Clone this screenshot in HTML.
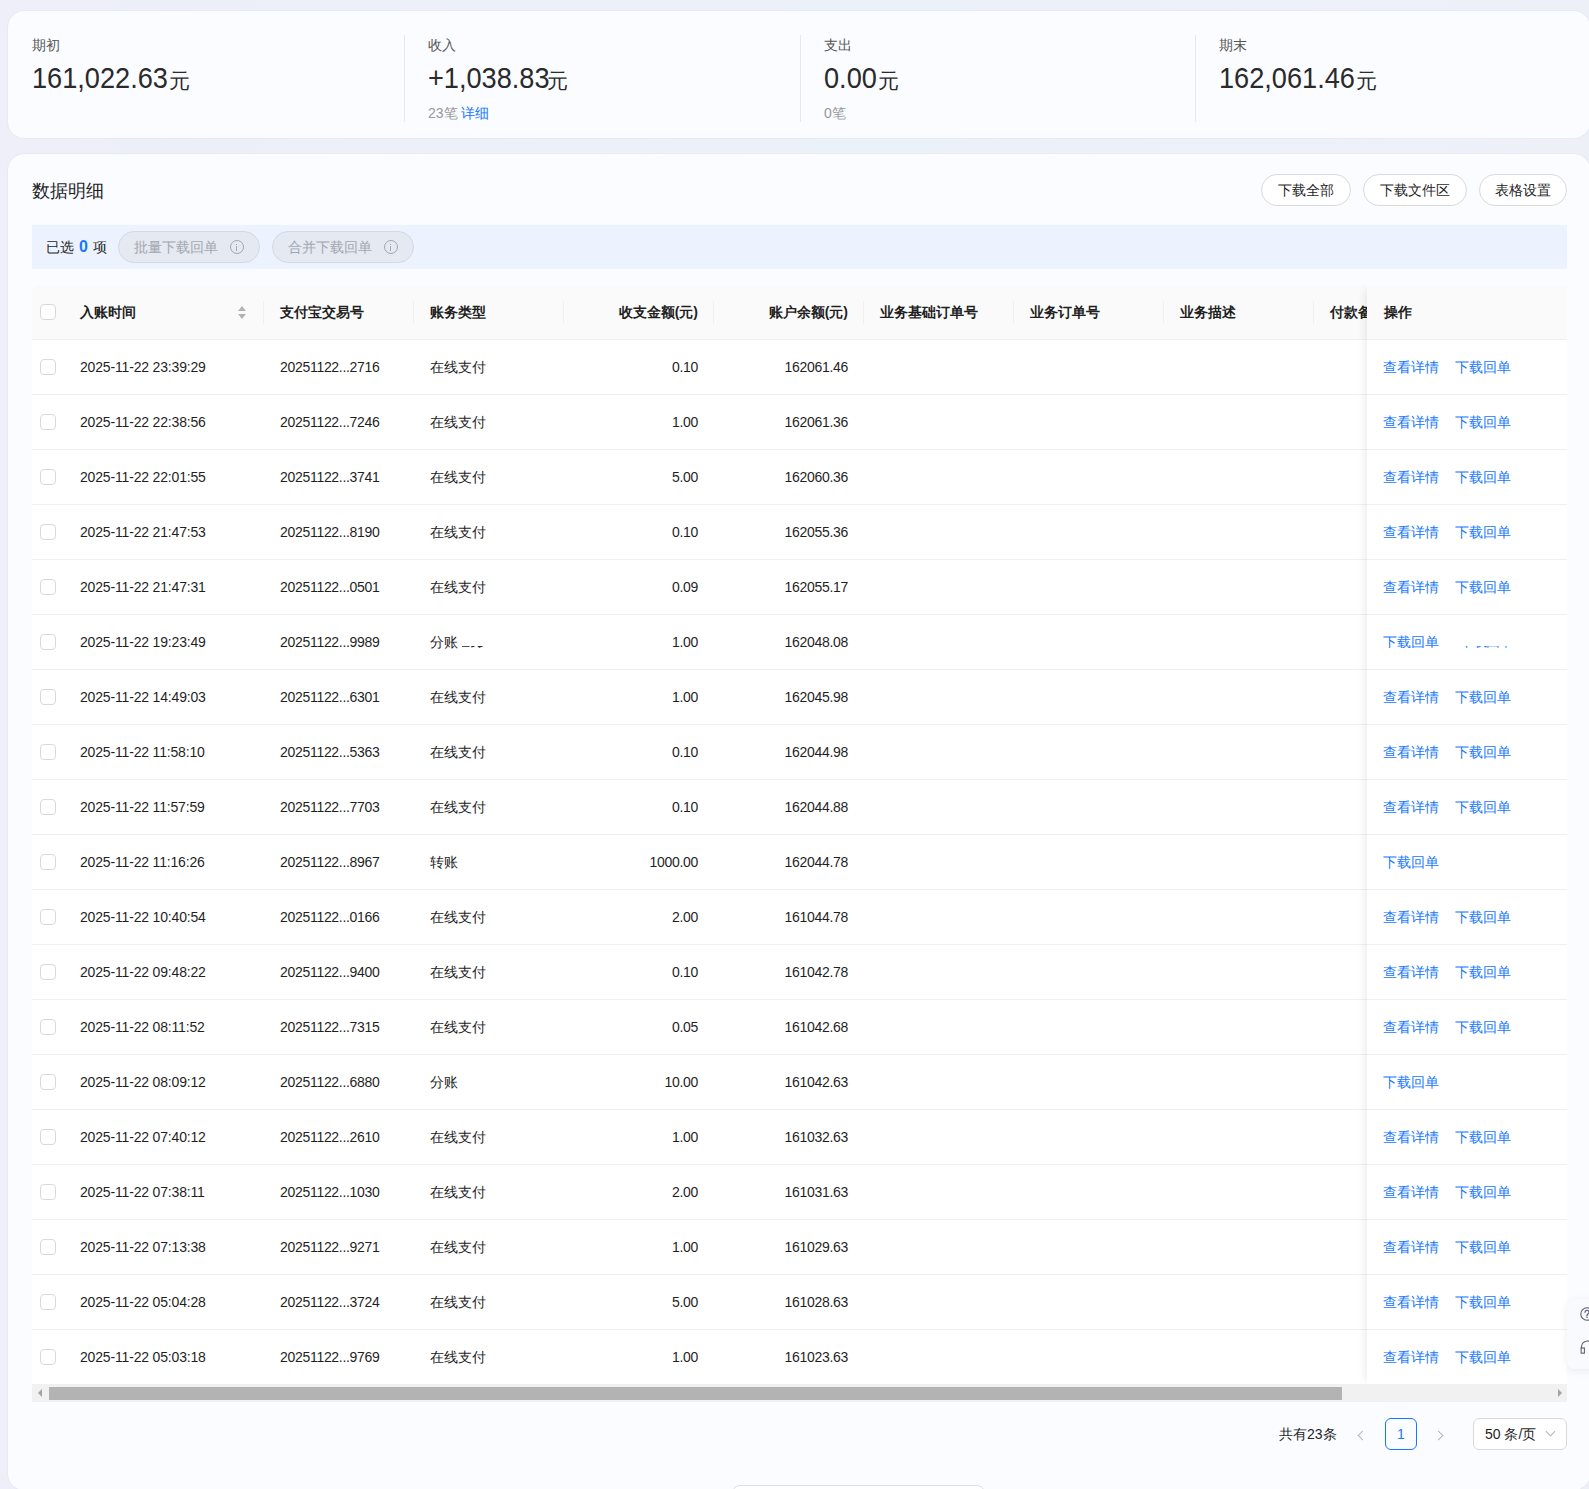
<!DOCTYPE html>
<html><head><meta charset="utf-8"><style>
*{margin:0;padding:0;box-sizing:border-box}
html,body{width:1589px;height:1489px;overflow:hidden}
body{background:linear-gradient(90deg,#eeeff8 0%,#ebf1f9 55%,#eef0f8 100%);font-family:"Liberation Sans",sans-serif;color:#1f1f1f;position:relative;font-size:14px}
.card{position:absolute;background:#fafcff;border-radius:16px;box-shadow:0 0 1.5px rgba(40,50,70,0.12)}
#c1{left:8px;top:11px;width:1582px;height:127px}
#c2{left:8px;top:154px;width:1582px;height:1336px}
.sum{position:absolute;top:0;height:126px}
.sep{position:absolute;top:24px;width:1px;height:87px;background:#e6e8ec}
.lbl{position:absolute;top:27px;font-size:13.5px;color:#555;line-height:16px;white-space:nowrap}
.num{position:absolute;left:0;top:50px;width:200px;height:34px;font-size:30px;line-height:34px;color:#2a2a2a;white-space:nowrap}
.num .d{position:absolute;left:0;top:0;transform:scaleX(0.905);transform-origin:0 0}
.num small{position:absolute;top:3px;font-size:20.5px;line-height:34px}
.sub{position:absolute;top:94px;font-size:14px;line-height:16px;color:#999;white-space:nowrap}
.sub a{color:#1677ff;text-decoration:none}
.title{position:absolute;left:24px;top:26px;font-size:18px;line-height:22px;color:#1f1f1f}
.btn{position:absolute;top:20px;height:32px;border:1px solid #d9d9d9;border-radius:16px;background:#fff;font-size:14px;line-height:30px;text-align:center;color:#1f1f1f}
.selbar{position:absolute;left:24px;top:71px;width:1535px;height:44px;background:#edf3fe}
.selbar .t{position:absolute;left:14px;top:14px;font-size:14px;line-height:16px;white-space:nowrap}
.selbar .t b{color:#1677ff;font-size:16px;margin:0 1px}
.pill{position:absolute;top:6px;height:32px;width:142px;border:1px solid #d5d9e0;border-radius:16px;background:#e4e9f2;color:#a3a7ae;font-size:14px;line-height:30px;padding-left:15px;white-space:nowrap}
.pill i{position:absolute;right:15px;top:8px;width:14px;height:14px;border:1.3px solid #a3a7ae;border-radius:50%}
.pill i:before{content:"";position:absolute;left:5.2px;top:5px;width:1.2px;height:5px;background:#a3a7ae}
.pill i:after{content:"";position:absolute;left:5.2px;top:2.5px;width:1.2px;height:1.2px;background:#a3a7ae}
#tbl{position:absolute;left:24px;top:131px;width:1535px;height:1100px;overflow:hidden;border-radius:8px 0 0 0}
.hdr{position:absolute;left:0;top:0;width:1535px;height:55px;background:#fafafa;border-bottom:1px solid #f0f0f0}
.h{position:absolute;top:19px;font-size:14px;font-weight:bold;line-height:16px;white-space:nowrap;color:#1f1f1f}
.hs{position:absolute;top:16px;width:1px;height:23px;background:#f0f0f0}
.row{position:absolute;left:0;width:1535px;height:55px;background:#fff;border-bottom:1px solid #f0f0f0}
.row.last{border-bottom:none}
.cb{position:absolute;left:8px;top:19px;width:16px;height:16px;border:1px solid #d9d9d9;border-radius:4px;background:#fff}
.c{position:absolute;top:19px;font-size:14px;line-height:16px;white-space:nowrap;color:#1f1f1f}
.c1{left:48px;letter-spacing:-0.17px}.c2,.c4,.c5{letter-spacing:-0.3px}.c2{left:248px}.c3{left:398px}
.c4{right:869px;text-align:right}.c5{right:719px;text-align:right}
.g1{position:absolute;left:32px;top:12px;width:24px;height:2px;overflow:hidden}
.g1 span{position:absolute;left:-6px;top:-13px;letter-spacing:-3px;font-size:14px;line-height:16px}
.lk.clip{height:14px;overflow:hidden}
.clip2{position:absolute;left:93px;top:31px;width:52px;height:2px;overflow:hidden}
.clip2 span{position:absolute;left:0;top:-13px;font-size:14px;line-height:16px;color:#1677ff;white-space:nowrap;letter-spacing:-1px}
.fix{position:absolute;left:1335px;top:0;width:201px;height:1100px;box-shadow:-6px 0 8px -4px rgba(0,0,0,0.08)}
.fix .fh{position:absolute;left:0;top:0;width:201px;height:55px;background:#fafafa;border-bottom:1px solid #f0f0f0}
.orow{position:absolute;left:0;width:201px;height:55px;background:#fff;border-bottom:1px solid #f0f0f0}
.orow.last{border-bottom:none}
.lk{position:relative;top:19px;left:16px;margin-right:16px;font-size:14px;line-height:16px;color:#1677ff;white-space:nowrap;float:left}
.scroll{position:absolute;left:24px;top:1230px;width:1535px;height:18px;background:#f1f1f1}
.thumb{position:absolute;left:17px;top:3px;width:1293px;height:13px;background:#b3b3b3}
.arrL{position:absolute;left:6px;top:5px;width:0;height:0;border-top:4px solid transparent;border-bottom:4px solid transparent;border-right:4px solid #a3a3a3}
.arrR{position:absolute;right:5px;top:5px;width:0;height:0;border-top:4px solid transparent;border-bottom:4px solid transparent;border-left:4px solid #a3a3a3}
.pg{position:absolute;top:1264px;font-size:14px;line-height:32px;color:#1f1f1f;white-space:nowrap}
.pbox{position:absolute;top:1264px;width:32px;height:32px;border:1px solid #1677ff;border-radius:6px;color:#1677ff;text-align:center;line-height:30px;font-size:14px}
.chev{position:absolute;width:7px;height:7px;border-left:1px solid #b5b5b5;border-bottom:1px solid #b5b5b5}
.psel{position:absolute;top:1264px;left:1465px;width:94px;height:32px;border:1px solid #d9d9d9;border-radius:6px;background:#fff;font-size:14px;line-height:30px;padding-left:11px;white-space:nowrap}

.widget{position:absolute;left:1567px;top:1299px;width:40px;height:70px;background:#f9fafd;border-radius:8px;box-shadow:0 2px 8px rgba(0,0,0,0.07)}
.widget .q{position:absolute;left:13px;top:8px;width:13px;height:13px;border:1.3px solid #5c6070;border-radius:50%;font-size:9px;line-height:11px;text-align:center;color:#5c6070;font-weight:bold}
.widget .hs2{position:absolute;left:14px;top:42px;width:14px;height:12px;border:1.5px solid #5c6070;border-bottom:none;border-radius:7px 7px 0 0}
.widget .hs2:before{content:"";position:absolute;left:-1.5px;top:5px;width:4px;height:7px;border:1.5px solid #5c6070;box-sizing:border-box}
.bbox{position:absolute;left:732px;top:1485px;width:253px;height:40px;background:#fff;border:1px solid #dcdee3;border-radius:8px}
.sort{position:absolute;left:206px;top:21px;width:9px;height:14px}
.sort:before{content:"";position:absolute;left:0;top:0;border-left:4.5px solid transparent;border-right:4.5px solid transparent;border-bottom:5.5px solid #b3b3b3}
.sort:after{content:"";position:absolute;left:0;top:8px;border-left:4.5px solid transparent;border-right:4.5px solid transparent;border-top:5.5px solid #b3b3b3}

</style></head><body>
<div class="card" id="c1">
  <div class="sum" style="left:24px"><div class="lbl" style="left:0">期初</div><div class="num"><span class="d">161,022.63</span><small style="left:137px">元</small></div></div>
  <div class="sep" style="left:396px"></div>
  <div class="sum" style="left:420px"><div class="lbl" style="left:0">收入</div><div class="num"><span class="d">+1,038.83</span><small style="left:119px">元</small></div><div class="sub" style="left:0">23笔 <a>详细</a></div></div>
  <div class="sep" style="left:792px"></div>
  <div class="sum" style="left:816px"><div class="lbl" style="left:0">支出</div><div class="num"><span class="d">0.00</span><small style="left:54px">元</small></div><div class="sub" style="left:0">0笔</div></div>
  <div class="sep" style="left:1187px"></div>
  <div class="sum" style="left:1211px"><div class="lbl" style="left:0">期末</div><div class="num"><span class="d">162,061.46</span><small style="left:137px">元</small></div></div>
</div>
<div class="card" id="c2">
  <div class="title">数据明细</div>
  <div class="btn" style="left:1253px;width:90px">下载全部</div>
  <div class="btn" style="left:1355px;width:104px">下载文件区</div>
  <div class="btn" style="left:1471px;width:88px">表格设置</div>
  <div class="selbar">
    <div class="t">已选 <b>0</b> 项</div>
    <div class="pill" style="left:86px">批量下载回单<i></i></div>
    <div class="pill" style="left:240px">合并下载回单<i></i></div>
  </div>
  <div id="tbl">
    <div class="hdr">
      <span class="cb"></span>
      <span class="h" style="left:48px">入账时间</span><span class="sort"></span>
      <span class="hs" style="left:231px"></span>
      <span class="h" style="left:248px">支付宝交易号</span>
      <span class="hs" style="left:381px"></span>
      <span class="h" style="left:398px">账务类型</span>
      <span class="hs" style="left:531px"></span>
      <span class="h" style="right:869px">收支金额(元)</span>
      <span class="hs" style="left:681px"></span>
      <span class="h" style="right:719px">账户余额(元)</span>
      <span class="hs" style="left:831px"></span>
      <span class="h" style="left:848px">业务基础订单号</span>
      <span class="hs" style="left:981px"></span>
      <span class="h" style="left:998px">业务订单号</span>
      <span class="hs" style="left:1131px"></span>
      <span class="h" style="left:1148px">业务描述</span>
      <span class="hs" style="left:1281px"></span>
      <span class="h" style="left:1298px">付款备注</span>
    </div>
<div class="row" style="top:55px"><span class="cb"></span><span class="c c1">2025-11-22 23:39:29</span><span class="c c2">20251122...2716</span><span class="c c3">在线支付</span><span class="c c4">0.10</span><span class="c c5">162061.46</span></div>
<div class="row" style="top:110px"><span class="cb"></span><span class="c c1">2025-11-22 22:38:56</span><span class="c c2">20251122...7246</span><span class="c c3">在线支付</span><span class="c c4">1.00</span><span class="c c5">162061.36</span></div>
<div class="row" style="top:165px"><span class="cb"></span><span class="c c1">2025-11-22 22:01:55</span><span class="c c2">20251122...3741</span><span class="c c3">在线支付</span><span class="c c4">5.00</span><span class="c c5">162060.36</span></div>
<div class="row" style="top:220px"><span class="cb"></span><span class="c c1">2025-11-22 21:47:53</span><span class="c c2">20251122...8190</span><span class="c c3">在线支付</span><span class="c c4">0.10</span><span class="c c5">162055.36</span></div>
<div class="row" style="top:275px"><span class="cb"></span><span class="c c1">2025-11-22 21:47:31</span><span class="c c2">20251122...0501</span><span class="c c3">在线支付</span><span class="c c4">0.09</span><span class="c c5">162055.17</span></div>
<div class="row" style="top:330px"><span class="cb"></span><span class="c c1">2025-11-22 19:23:49</span><span class="c c2">20251122...9989</span><span class="c c3">分账<span class="g1"><span>在线支付</span></span></span><span class="c c4">1.00</span><span class="c c5">162048.08</span></div>
<div class="row" style="top:385px"><span class="cb"></span><span class="c c1">2025-11-22 14:49:03</span><span class="c c2">20251122...6301</span><span class="c c3">在线支付</span><span class="c c4">1.00</span><span class="c c5">162045.98</span></div>
<div class="row" style="top:440px"><span class="cb"></span><span class="c c1">2025-11-22 11:58:10</span><span class="c c2">20251122...5363</span><span class="c c3">在线支付</span><span class="c c4">0.10</span><span class="c c5">162044.98</span></div>
<div class="row" style="top:495px"><span class="cb"></span><span class="c c1">2025-11-22 11:57:59</span><span class="c c2">20251122...7703</span><span class="c c3">在线支付</span><span class="c c4">0.10</span><span class="c c5">162044.88</span></div>
<div class="row" style="top:550px"><span class="cb"></span><span class="c c1">2025-11-22 11:16:26</span><span class="c c2">20251122...8967</span><span class="c c3">转账</span><span class="c c4">1000.00</span><span class="c c5">162044.78</span></div>
<div class="row" style="top:605px"><span class="cb"></span><span class="c c1">2025-11-22 10:40:54</span><span class="c c2">20251122...0166</span><span class="c c3">在线支付</span><span class="c c4">2.00</span><span class="c c5">161044.78</span></div>
<div class="row" style="top:660px"><span class="cb"></span><span class="c c1">2025-11-22 09:48:22</span><span class="c c2">20251122...9400</span><span class="c c3">在线支付</span><span class="c c4">0.10</span><span class="c c5">161042.78</span></div>
<div class="row" style="top:715px"><span class="cb"></span><span class="c c1">2025-11-22 08:11:52</span><span class="c c2">20251122...7315</span><span class="c c3">在线支付</span><span class="c c4">0.05</span><span class="c c5">161042.68</span></div>
<div class="row" style="top:770px"><span class="cb"></span><span class="c c1">2025-11-22 08:09:12</span><span class="c c2">20251122...6880</span><span class="c c3">分账</span><span class="c c4">10.00</span><span class="c c5">161042.63</span></div>
<div class="row" style="top:825px"><span class="cb"></span><span class="c c1">2025-11-22 07:40:12</span><span class="c c2">20251122...2610</span><span class="c c3">在线支付</span><span class="c c4">1.00</span><span class="c c5">161032.63</span></div>
<div class="row" style="top:880px"><span class="cb"></span><span class="c c1">2025-11-22 07:38:11</span><span class="c c2">20251122...1030</span><span class="c c3">在线支付</span><span class="c c4">2.00</span><span class="c c5">161031.63</span></div>
<div class="row" style="top:935px"><span class="cb"></span><span class="c c1">2025-11-22 07:13:38</span><span class="c c2">20251122...9271</span><span class="c c3">在线支付</span><span class="c c4">1.00</span><span class="c c5">161029.63</span></div>
<div class="row" style="top:990px"><span class="cb"></span><span class="c c1">2025-11-22 05:04:28</span><span class="c c2">20251122...3724</span><span class="c c3">在线支付</span><span class="c c4">5.00</span><span class="c c5">161028.63</span></div>
<div class="row last" style="top:1045px"><span class="cb"></span><span class="c c1">2025-11-22 05:03:18</span><span class="c c2">20251122...9769</span><span class="c c3">在线支付</span><span class="c c4">1.00</span><span class="c c5">161023.63</span></div>
    <div class="fix">
      <div class="fh"><span class="h" style="left:17px">操作</span></div>
<div class="orow" style="top:55px"><span class="lk">查看详情</span><span class="lk">下载回单</span></div>
<div class="orow" style="top:110px"><span class="lk">查看详情</span><span class="lk">下载回单</span></div>
<div class="orow" style="top:165px"><span class="lk">查看详情</span><span class="lk">下载回单</span></div>
<div class="orow" style="top:220px"><span class="lk">查看详情</span><span class="lk">下载回单</span></div>
<div class="orow" style="top:275px"><span class="lk">查看详情</span><span class="lk">下载回单</span></div>
<div class="orow" style="top:330px"><span class="lk clip">下载回单</span><span class="clip2"><span>下载回单</span></span></div>
<div class="orow" style="top:385px"><span class="lk">查看详情</span><span class="lk">下载回单</span></div>
<div class="orow" style="top:440px"><span class="lk">查看详情</span><span class="lk">下载回单</span></div>
<div class="orow" style="top:495px"><span class="lk">查看详情</span><span class="lk">下载回单</span></div>
<div class="orow" style="top:550px"><span class="lk">下载回单</span></div>
<div class="orow" style="top:605px"><span class="lk">查看详情</span><span class="lk">下载回单</span></div>
<div class="orow" style="top:660px"><span class="lk">查看详情</span><span class="lk">下载回单</span></div>
<div class="orow" style="top:715px"><span class="lk">查看详情</span><span class="lk">下载回单</span></div>
<div class="orow" style="top:770px"><span class="lk">下载回单</span></div>
<div class="orow" style="top:825px"><span class="lk">查看详情</span><span class="lk">下载回单</span></div>
<div class="orow" style="top:880px"><span class="lk">查看详情</span><span class="lk">下载回单</span></div>
<div class="orow" style="top:935px"><span class="lk">查看详情</span><span class="lk">下载回单</span></div>
<div class="orow" style="top:990px"><span class="lk">查看详情</span><span class="lk">下载回单</span></div>
<div class="orow last" style="top:1045px"><span class="lk">查看详情</span><span class="lk">下载回单</span></div>
    </div>
  </div>
  <div class="scroll"><span class="arrL"></span><span class="thumb"></span><span class="arrR"></span></div>
  <div class="pg" style="left:1271px">共有23条</div>
  <span class="chev" style="left:1351px;top:1278px;transform:rotate(45deg)"></span>
  <div class="pbox" style="left:1377px">1</div>
  <span class="chev" style="left:1427px;top:1278px;transform:rotate(-135deg)"></span>
  <div class="psel">50 条/页<span class="chev" style="left:73px;top:9px;transform:rotate(-45deg)"></span></div>
</div>
<div class="widget"><svg style="position:absolute;left:12px;top:7px" width="16" height="16" viewBox="0 0 16 16"><circle cx="8" cy="8" r="6.2" fill="none" stroke="#5c6070" stroke-width="1.1"/><path d="M6 6.3a2 2 0 1 1 2.8 1.8c-.6.3-.8.6-.8 1.2v.4" fill="none" stroke="#5c6070" stroke-width="1.2" stroke-linecap="round"/><circle cx="8" cy="11.3" r=".8" fill="#5c6070"/></svg><svg style="position:absolute;left:13px;top:41px" width="15" height="15" viewBox="0 0 16 16"><path d="M1.5 9V7.5a6.5 6.5 0 0 1 13 0V9" fill="none" stroke="#5c6070" stroke-width="1.15"/><rect x="1.2" y="8.5" width="3.5" height="5.5" fill="none" stroke="#5c6070" stroke-width="1.15"/><rect x="11.3" y="8.5" width="3.5" height="5.5" fill="none" stroke="#5c6070" stroke-width="1.15"/></svg></div>
<div class="bbox"></div>

</body></html>
